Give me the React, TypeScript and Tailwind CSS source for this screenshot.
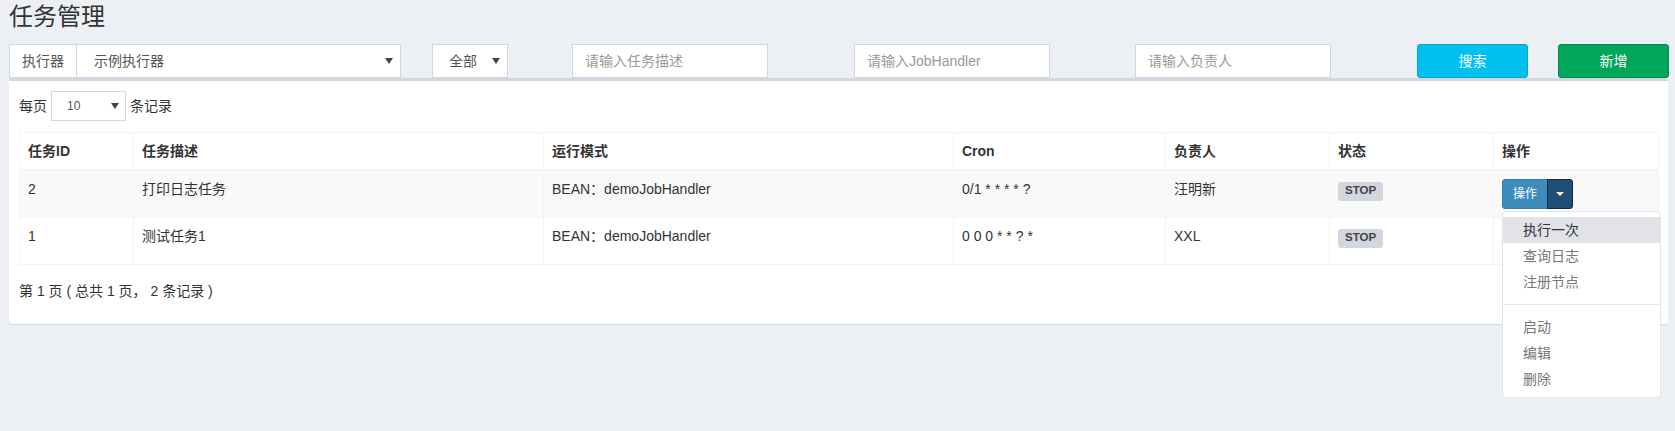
import React from "react";

function Caret({ color = "border-t-[#444]" }: { color?: string }) {
  return (
    <span
      className={`inline-block h-0 w-0 border-x-[4px] border-t-[6px] border-x-transparent ${color}`}
    />
  );
}

function StopLabel() {
  return (
    <span className="inline-block rounded-[3px] bg-[#d2d6de] px-[7px] pt-[3px] pb-[4px] text-[11.5px] font-bold leading-none text-[#444]">
      STOP
    </span>
  );
}

function OpButton({ open }: { open?: boolean }) {
  return (
    <div className={`relative inline-flex h-[30px] align-top ${open ? "" : "invisible"}`}>
      <div className="flex h-[30px] items-center rounded-l-[3px] border border-[#367fa9] bg-[#3c8dbc] px-[10px] text-[12px] leading-[18px] text-white">
        操作
      </div>
      <div className="-ml-px flex h-[30px] w-[26px] items-center justify-center rounded-r-[3px] border border-[#122b40] bg-[#204d74]">
        <span className="inline-block h-0 w-0 border-x-[4px] border-t-[4px] border-x-transparent border-t-white" />
      </div>
      {open && (
        <div className="absolute left-0 top-[32px] z-10 w-[159px] rounded-[4px] border border-[#e6e6e6] bg-white py-[5px] text-[14px] leading-[20px] text-[#777]">
          <div className="bg-[#e1e3e9] px-[20px] py-[3px] text-[#333]">执行一次</div>
          <div className="px-[20px] py-[3px]">查询日志</div>
          <div className="px-[20px] py-[3px]">注册节点</div>
          <div className="my-[9px] h-px bg-[#e5e5e5]" />
          <div className="px-[20px] py-[3px]">启动</div>
          <div className="px-[20px] py-[3px]">编辑</div>
          <div className="px-[20px] py-[3px]">删除</div>
        </div>
      )}
    </div>
  );
}

const grid =
  "grid grid-cols-[114px_410px_410px_212px_164px_164px_165px]";
const cell = "border-r border-b border-[#f4f4f4] p-[8px]";

export default function App() {
  const rows = [
    {
      id: "2",
      desc: "打印日志任务",
      mode: "BEAN：demoJobHandler",
      cron: "0/1 * * * * ?",
      owner: "汪明新",
      open: true,
      bg: "bg-[#f9f9f9]",
    },
    {
      id: "1",
      desc: "测试任务1",
      mode: "BEAN：demoJobHandler",
      cron: "0 0 0 * * ? *",
      owner: "XXL",
      open: false,
      bg: "bg-white",
    },
  ];
  const headers = ["任务ID", "任务描述", "运行模式", "Cron", "负责人", "状态", "操作"];

  return (
    <div className="min-h-[431px] w-[1675px] bg-[#ecf0f5] font-['Liberation_Sans','Noto_Sans_CJK_SC',sans-serif] text-[14px] leading-[20px] text-[#333]">
      <h1 className="ml-[9px] pt-[4px] text-[24px] font-normal leading-[26px] text-[#333]">
        任务管理
      </h1>

      <div className="mt-[14px] flex h-[34px] text-[#555]">
        <div className="ml-[9px] flex w-[392px]">
          <div className="flex w-[68px] items-center justify-center border border-[#d2d6de] bg-white">
            执行器
          </div>
          <div className="-ml-px flex flex-1 items-center justify-between border border-[#d2d6de] bg-white pl-[17px] pr-[7px]">
            <span>示例执行器</span>
            <Caret />
          </div>
        </div>
        <div className="ml-[31px] flex w-[76px] items-center justify-between border border-[#d2d6de] bg-white pl-[16px] pr-[7px]">
          <span>全部</span>
          <Caret />
        </div>
        <input
          readOnly
          placeholder="请输入任务描述"
          className="ml-[64px] h-[34px] w-[196px] border border-[#d2d6de] bg-white px-[12px] text-[14px] outline-none placeholder:text-[#999]"
        />
        <input
          readOnly
          placeholder="请输入JobHandler"
          className="ml-[86px] h-[34px] w-[196px] border border-[#d2d6de] bg-white px-[12px] text-[14px] outline-none placeholder:text-[#999]"
        />
        <input
          readOnly
          placeholder="请输入负责人"
          className="ml-[85px] h-[34px] w-[196px] border border-[#d2d6de] bg-white px-[12px] text-[14px] outline-none placeholder:text-[#999]"
        />
        <div className="ml-[86px] flex w-[111px] items-center justify-center rounded-[3px] border border-[#00acd6] bg-[#00c0ef] text-white">
          搜索
        </div>
        <div className="ml-[30px] flex w-[111px] items-center justify-center rounded-[3px] border border-[#008d4c] bg-[#00a65a] text-white">
          新增
        </div>
      </div>

      <div className="ml-[9px] w-[1659px] rounded-[3px] border-t-[3px] border-[#d2d6de] bg-white pl-[10px] pt-[10px] pb-[23px] shadow-[0_1px_1px_rgba(0,0,0,0.1)]">
        <div className="flex h-[30px] items-center gap-[4px]">
          <span>每页</span>
          <div className="flex h-[30px] w-[75px] items-center justify-between border border-[#d2d6de] bg-white pl-[15px] pr-[6px] text-[12px] text-[#555]">
            <span>10</span>
            <Caret />
          </div>
          <span>条记录</span>
        </div>

        <div className="mt-[11px] w-[1640px] border-l border-t border-[#f4f4f4]">
          <div className={grid}>
            {headers.map((h) => (
              <div
                key={h}
                className="border-r border-b-2 border-[#f4f4f4] p-[8px] font-bold"
              >
                {h}
              </div>
            ))}
          </div>
          {rows.map((r) => (
            <div key={r.id} className={`${grid} ${r.bg}`}>
              <div className={cell}>{r.id}</div>
              <div className={cell}>{r.desc}</div>
              <div className={cell}>{r.mode}</div>
              <div className={cell}>{r.cron}</div>
              <div className={cell}>{r.owner}</div>
              <div className={cell}>
                <StopLabel />
              </div>
              <div className={cell}>
                <OpButton open={r.open} />
              </div>
            </div>
          ))}
        </div>

        <div className="mt-[16px]">第 1 页 ( 总共 1 页， 2 条记录 )</div>
      </div>
    </div>
  );
}
